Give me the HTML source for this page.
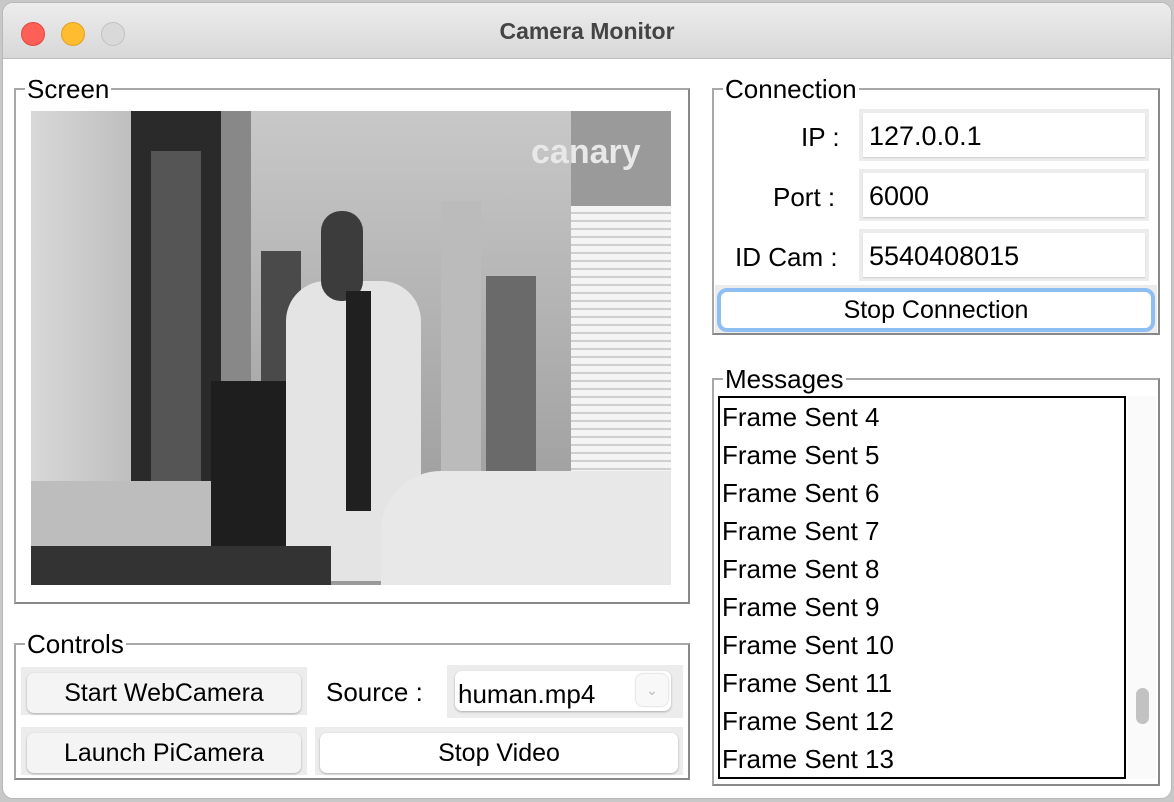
<!DOCTYPE html>
<html><head><style>
*{margin:0;padding:0;box-sizing:border-box}
body{width:1174px;height:802px;background:#c8c8c8;font-family:"Liberation Sans",sans-serif;position:relative;overflow:hidden;color:#000}
.win{position:absolute;left:2px;top:2px;width:1170px;height:797px;border-radius:11px;background:#fff;overflow:hidden;border:1px solid #b8b8b8}
.title{position:absolute;left:0;top:0;width:100%;height:56px;background:linear-gradient(#ececec,#d8d8d8);border-bottom:1px solid #bdbdbd;text-align:center;font-weight:bold;font-size:23px;line-height:56px;color:#444}
.dot{position:absolute;top:19px;width:24px;height:24px;border-radius:50%}
.a{position:absolute}
.grp{position:absolute;border:2px solid #a8a8a8;border-right-color:#888;border-bottom-color:#888}
.lbl{position:absolute;background:#fff;font-size:26px;padding:0 2px;line-height:26px}
.t{font-size:26px;position:absolute;white-space:nowrap}
.btn{position:absolute;background:#f4f4f4;border-radius:7px;box-shadow:0 1px 2px #aaa;text-align:center;font-size:25px}
.ent{position:absolute;background:#ececec}
.ent div{position:absolute;left:4px;top:4px;right:4px;bottom:4px;background:#fff;box-shadow:0 1px 1px #ccc;font-size:27px;padding-left:6px;line-height:46px}
.msg div{height:38px;line-height:38px;font-size:26px;padding-left:2px}
</style></head><body>
<div class="win">
<div class="title">Camera Monitor</div>
<div class="dot" style="left:18px;background:#fe5f57;border:1px solid #e2463f"></div>
<div class="dot" style="left:58px;background:#febc2e;border:1px solid #dea123"></div>
<div class="dot" style="left:98px;background:#d9d9d9;border:1px solid #c2c2c2"></div>
</div>

<!-- Screen -->
<div class="grp" style="left:14px;top:88px;width:676px;height:516px"></div>
<div class="lbl" style="left:25px;top:76px">Screen</div>
<div class="a" style="left:31px;top:111px;width:640px;height:474px;overflow:hidden;background:#9a9a9a">
 <div class="a" style="left:0;top:0;width:110px;height:474px;background:linear-gradient(90deg,#d8d8d8,#bcbcbc)"></div>
 <div class="a" style="left:100px;top:0;width:90px;height:474px;background:#2a2a2a"></div>
 <div class="a" style="left:120px;top:40px;width:50px;height:400px;background:#555"></div>
 <div class="a" style="left:190px;top:0;width:30px;height:474px;background:#888"></div>
 <div class="a" style="left:220px;top:0;width:320px;height:420px;background:linear-gradient(#c8c8c8,#9c9c9c)"></div>
 <div class="a" style="left:230px;top:140px;width:40px;height:280px;background:#4a4a4a"></div>
 <div class="a" style="left:180px;top:270px;width:95px;height:180px;background:#1e1e1e"></div>
 <div class="a" style="left:255px;top:170px;width:135px;height:300px;background:#e4e4e4;border-radius:40px 40px 0 0"></div>
 <div class="a" style="left:290px;top:100px;width:42px;height:90px;background:#3c3c3c;border-radius:20px"></div>
 <div class="a" style="left:315px;top:180px;width:25px;height:220px;background:#202020"></div>
 <div class="a" style="left:410px;top:90px;width:40px;height:280px;background:#bbb"></div>
 <div class="a" style="left:455px;top:165px;width:50px;height:220px;background:#6a6a6a"></div>
 <div class="a" style="left:540px;top:95px;width:100px;height:290px;background:repeating-linear-gradient(#f4f4f4 0 6px,#cfcfcf 6px 8px)"></div>
 <div class="a" style="left:350px;top:360px;width:290px;height:114px;background:#e8e8e8;border-radius:60px 0 0 0"></div>
 <div class="a" style="left:0;top:370px;width:180px;height:104px;background:#bdbdbd"></div>
 <div class="a" style="left:0;top:435px;width:300px;height:39px;background:#333"></div>
 <div class="a" style="left:500px;top:22px;font-size:34px;font-weight:bold;color:#e8e8e8">canary</div>
</div>

<!-- Controls -->
<div class="grp" style="left:14px;top:643px;width:676px;height:137px"></div>
<div class="lbl" style="left:25px;top:631px">Controls</div>
<div class="a" style="left:21px;top:667px;width:286px;height:48px;background:#ececec"></div>
<div class="btn" style="left:27px;top:673px;width:274px;height:40px;line-height:40px">Start WebCamera</div>
<div class="t" style="left:326px;top:677px">Source :</div>
<div class="a" style="left:447px;top:665px;width:236px;height:53px;background:#ececec"></div>
<div class="btn" style="left:455px;top:671px;width:216px;height:40px;background:#fff;text-align:left;padding-left:3px;line-height:46px;font-size:26px">human.mp4</div>
<div class="a" style="left:636px;top:674px;width:32px;height:32px;border-radius:7px;background:#f8f8f8;box-shadow:0 0 2px #bbb;color:#bbb;text-align:center;font-size:14px;line-height:32px">&#8964;</div>
<div class="a" style="left:21px;top:727px;width:286px;height:48px;background:#ececec"></div>
<div class="btn" style="left:27px;top:733px;width:274px;height:40px;line-height:40px">Launch PiCamera</div>
<div class="a" style="left:315px;top:727px;width:368px;height:48px;background:#ececec"></div>
<div class="btn" style="left:320px;top:733px;width:358px;height:40px;line-height:40px;background:#fff">Stop Video</div>

<!-- Connection -->
<div class="grp" style="left:712px;top:88px;width:448px;height:247px"></div>
<div class="lbl" style="left:723px;top:76px">Connection</div>
<div class="t" style="left:801px;top:122px">IP :</div>
<div class="t" style="left:773px;top:182px">Port :</div>
<div class="t" style="left:735px;top:242px">ID Cam :</div>
<div class="ent" style="left:859px;top:109px;width:290px;height:52px"><div>127.0.0.1</div></div>
<div class="ent" style="left:859px;top:169px;width:290px;height:52px"><div>6000</div></div>
<div class="ent" style="left:859px;top:229px;width:290px;height:52px"><div>5540408015</div></div>
<div class="a" style="left:715px;top:285px;width:442px;height:48px;background:#ececec"></div>
<div class="btn" style="left:717px;top:288px;width:438px;height:44px;background:#fff;border:4px solid #8fbff2;border-radius:10px;line-height:36px;box-shadow:none">Stop Connection</div>

<!-- Messages -->
<div class="grp" style="left:712px;top:378px;width:448px;height:408px"></div>
<div class="lbl" style="left:723px;top:366px">Messages</div>
<div class="a msg" style="left:718px;top:396px;width:408px;height:383px;border:2px solid #000;background:#fff;overflow:hidden">
<div>Frame Sent 4</div><div>Frame Sent 5</div><div>Frame Sent 6</div><div>Frame Sent 7</div><div>Frame Sent 8</div><div>Frame Sent 9</div><div>Frame Sent 10</div><div>Frame Sent 11</div><div>Frame Sent 12</div><div>Frame Sent 13</div>
</div>
<div class="a" style="left:1128px;top:396px;width:28px;height:383px;background:#fafafa"></div>
<div class="a" style="left:1136px;top:688px;width:13px;height:36px;background:#c2c2c2;border-radius:7px"></div>
</body></html>
